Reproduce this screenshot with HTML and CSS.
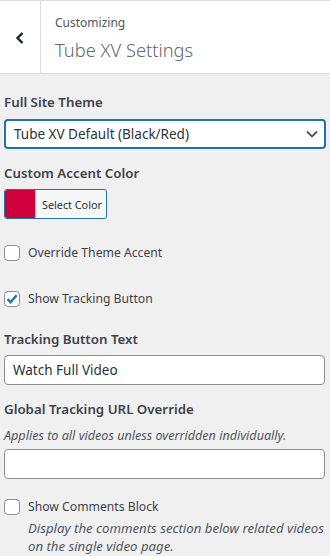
FILE: index.html
```html
<!DOCTYPE html>
<html lang="en">

<head>
  <meta charset="UTF-8">
  <meta name="viewport" content="width=device-width, initial-scale=1.0">
  <title>Tube XV Settings</title>

  <link rel="stylesheet" href="styles.css">
</head>

<body>
  <div class="panel-header">
    <div class="back-btn">
      <svg width="12" height="14" viewBox="0 0 12 14"><path d="M8.5 2 L3.5 7 L8.5 12" fill="none" stroke="#1d2327" stroke-width="2.4"/></svg>
    </div>
    <div class="panel-info">
      <span class="notice">Customizing</span>
      <span class="panel-title">Tube XV Settings</span>
    </div>
  </div>

  <div class="controls">
    <div class="control control-first">
      <label class="control-title">Full Site Theme</label>
      <div class="select-box">
        <span>Tube XV Default (Black/Red)</span>
        <svg class="chevron" width="14" height="10" viewBox="0 0 14 10"><path d="M2 2.5 L7 7.5 L12 2.5" fill="none" stroke="#50575e" stroke-width="1.8"/></svg>
      </div>
    </div>

    <div class="control">
      <label class="control-title">Custom Accent Color</label>
      <div class="color-btn">
        <span class="swatch"></span>
        <span class="color-text">Select Color</span>
      </div>
    </div>

    <div class="check-row check-first">
      <span class="checkbox"></span>
      <span>Override Theme Accent</span>
    </div>

    <div class="check-row check-second">
      <span class="checkbox">
        <svg width="14" height="14" viewBox="0 0 14 14"><path d="M2.5 7.2 L5.6 10.3 L11.6 3.2" fill="none" stroke="#2271b1" stroke-width="2.4"/></svg>
      </span>
      <span>Show Tracking Button</span>
    </div>

    <div class="control control-after-check">
      <label class="control-title title-tight">Tracking Button Text</label>
      <div class="text-input">Watch Full Video</div>
    </div>

    <div class="control">
      <label class="control-title">Global Tracking URL Override</label>
      <p class="description">Applies to all videos unless overridden individually.</p>
      <div class="text-input input-tight"></div>
    </div>

    <div class="check-row check-last">
      <span class="checkbox"></span>
      <span>Show Comments Block</span>
    </div>
    <p class="description check-desc">Display the comments section below related videos on the single video page.</p>
  </div>
</body>
</html>
```

FILE: styles.css
```css
body {
  margin: 0;
  background-color: #f0f0f1;
  font-family: 'Noto Sans', sans-serif;
  font-size: 13px;
  color: #3c434a;
}

.panel-header {
  display: flex;
  height: 72px;
  background-color: white;
  border-top: 1px solid #dcdcde;
  border-bottom: 1px solid #dcdcde;
  box-sizing: content-box;
}

.back-btn {
  width: 40px;
  border-right: 1px solid #dcdcde;
  display: flex;
  align-items: center;
  justify-content: center;
  padding-top: 2px;
}

.panel-info {
  display: flex;
  flex-direction: column;
  padding: 12px 0 0 14px;
}

.notice {
  font-size: 12px;
  line-height: 20px;
  color: #50575e;
}

.panel-title {
  font-size: 18.3px;
  font-weight: 300;
  line-height: 26px;
  margin-top: 4px;
  color: #646970;
}

.controls {
  padding: 0 4px;
}

.control {
  margin-top: 14px;
}

.control-first {
  margin-top: 18px;
}

.control-after-check {
  margin-top: 20px;
}

.control-title {
  display: block;
  font-size: 13.3px;
  font-weight: 600;
  line-height: 20px;
  color: #3c434a;
  margin-bottom: 7px;
}

.title-tight {
  margin-bottom: 6px;
}

.select-box {
  height: 30px;
  border: 2px solid #2271b1;
  border-radius: 4px;
  background-color: white;
  box-sizing: border-box;
  display: flex;
  align-items: center;
  justify-content: space-between;
  padding: 0 5px 0 8px;
  font-size: 13.5px;
  color: #2c3338;
}

.color-btn {
  display: inline-flex;
  height: 30px;
  width: 103px;
  box-sizing: border-box;
  border: 1px solid #2271b1;
  border-radius: 3px;
  overflow: hidden;
  background-color: #f6f7f7;
  margin-top: -1px;
}

.swatch {
  width: 30px;
  background-color: #d0003c;
  border-right: 1px solid #c3c4c7;
}

.color-text {
  display: flex;
  align-items: center;
  padding-left: 6px;
  font-size: 10.8px;
  color: #2c3338;
}

.check-row {
  display: flex;
  align-items: center;
  gap: 8px;
  height: 20px;
  line-height: 20px;
  font-size: 12.2px;
}

.check-first {
  margin-top: 21px;
}

.check-second {
  margin-top: 26px;
}

.check-last {
  margin-top: 18px;
}

.checkbox {
  width: 16px;
  height: 16px;
  box-sizing: border-box;
  border: 1px solid #8c8f94;
  border-radius: 4px;
  background-color: white;
  display: flex;
  align-items: center;
  justify-content: center;
}

.text-input {
  height: 30px;
  box-sizing: border-box;
  border: 1px solid #8c8f94;
  border-radius: 4px;
  background-color: white;
  padding: 0 8px;
  line-height: 28px;
  font-size: 13.5px;
  color: #2c3338;
  margin-right: 1px;
}

.input-tight {
  margin-top: 3px;
}

.description {
  margin: 0;
  font-style: italic;
  font-size: 12.6px;
  line-height: 20px;
  color: #50575e;
}

.check-desc {
  font-size: 13.2px;
  line-height: 18px;
  padding-left: 24px;
  margin-top: 2px;
}
```
